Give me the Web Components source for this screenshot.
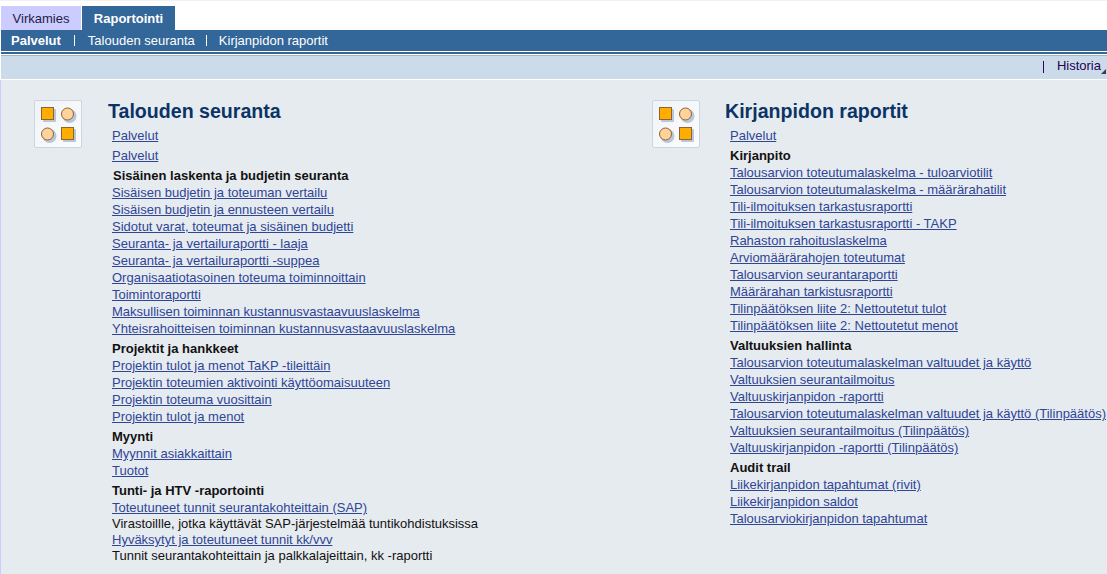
<!DOCTYPE html>
<html><head><meta charset="utf-8"><title>Raportointi</title>
<style>
html,body{margin:0;padding:0;height:574px;overflow:hidden;background:#fff;font:13px "Liberation Sans",Arial,sans-serif}
body{display:flex;flex-direction:column}
</style></head><body>
<app-tabs><app-tab>Virkamies</app-tab><app-tab active>Raportointi</app-tab></app-tabs>
<app-subnav><b>Palvelut</b><a>Talouden seuranta</a><a>Kirjanpidon raportit</a></app-subnav>
<app-toolbar>Historia</app-toolbar>
<app-content>
<report-panel heading="Talouden seuranta" style="--icon-left:33px;--text-left:107px;--pad:4px;width:617px">
<report-link first>Palvelut</report-link>
<report-link>Palvelut</report-link>
<report-head sub>Sisäinen laskenta ja budjetin seuranta</report-head>
<report-link>Sisäisen budjetin ja toteuman vertailu</report-link>
<report-link>Sisäisen budjetin ja ennusteen vertailu</report-link>
<report-link>Sidotut varat, toteumat ja sisäinen budjetti</report-link>
<report-link>Seuranta- ja vertailuraportti - laaja</report-link>
<report-link>Seuranta- ja vertailuraportti -suppea</report-link>
<report-link>Organisaatiotasoinen toteuma toiminnoittain</report-link>
<report-link>Toimintoraportti</report-link>
<report-link>Maksullisen toiminnan kustannusvastaavuuslaskelma</report-link>
<report-link>Yhteisrahoitteisen toiminnan kustannusvastaavuuslaskelma</report-link>
<report-head>Projektit ja hankkeet</report-head>
<report-link>Projektin tulot ja menot TaKP -tileittäin</report-link>
<report-link>Projektin toteumien aktivointi käyttöomaisuuteen</report-link>
<report-link>Projektin toteuma vuosittain</report-link>
<report-link>Projektin tulot ja menot</report-link>
<report-head>Myynti</report-head>
<report-link>Myynnit asiakkaittain</report-link>
<report-link>Tuotot</report-link>
<report-head>Tunti- ja HTV -raportointi</report-head>
<report-link tight>Toteutuneet tunnit seurantakohteittain (SAP)</report-link>
<report-link plain>Virastoillle, jotka käyttävät SAP-järjestelmää tuntikohdistuksissa</report-link>
<report-link tight>Hyväksytyt ja toteutuneet tunnit kk/vvv</report-link>
<report-link plain>Tunnit seurantakohteittain ja palkkalajeittain, kk -raportti</report-link>
</report-panel>
<report-panel heading="Kirjanpidon raportit" style="--icon-left:34px;--text-left:107px;--pad:5px;flex:1">
<report-link>Palvelut</report-link>
<report-head>Kirjanpito</report-head>
<report-link>Talousarvion toteutumalaskelma - tuloarviotilit</report-link>
<report-link>Talousarvion toteutumalaskelma - määrärahatilit</report-link>
<report-link>Tili-ilmoituksen tarkastusraportti</report-link>
<report-link>Tili-ilmoituksen tarkastusraportti - TAKP</report-link>
<report-link>Rahaston rahoituslaskelma</report-link>
<report-link>Arviomäärärahojen toteutumat</report-link>
<report-link>Talousarvion seurantaraportti</report-link>
<report-link>Määrärahan tarkistusraportti</report-link>
<report-link>Tilinpäätöksen liite 2: Nettoutetut tulot</report-link>
<report-link>Tilinpäätöksen liite 2: Nettoutetut menot</report-link>
<report-head>Valtuuksien hallinta</report-head>
<report-link>Talousarvion toteutumalaskelman valtuudet ja käyttö</report-link>
<report-link>Valtuuksien seurantailmoitus</report-link>
<report-link>Valtuuskirjanpidon -raportti</report-link>
<report-link>Talousarvion toteutumalaskelman valtuudet ja käyttö (Tilinpäätös)</report-link>
<report-link>Valtuuksien seurantailmoitus (Tilinpäätös)</report-link>
<report-link>Valtuuskirjanpidon -raportti (Tilinpäätös)</report-link>
<report-head>Audit trail</report-head>
<report-link>Liikekirjanpidon tapahtumat (rivit)</report-link>
<report-link>Liikekirjanpidon saldot</report-link>
<report-link>Talousarviokirjanpidon tapahtumat</report-link>
</report-panel>
</app-content>
<script>
function def(name, css, html){
  customElements.define(name, class extends HTMLElement{
    connectedCallback(){
      if(this.shadowRoot) return;
      const r=this.attachShadow({mode:'open'});
      r.innerHTML='<style>'+css+'</style>'+html;
    }
  });
}
def('app-tabs',':host{display:flex;height:24px;padding:5px 0 0 1px;gap:1px;background:#fff;border-top:1px solid #f2f2f2;flex:none}','<slot></slot>');
def('app-tab',`:host{display:flex;align-items:center;justify-content:center;height:24px;width:80px;background:#ccccff;color:#222244;font-size:13px}
:host([active]){width:93px;background:#336699;color:#fff;font-weight:bold}`,'<slot></slot>');
def('app-subnav',`:host{display:flex;align-items:center;height:21px;background:#336699;color:#fff;font-size:13px;margin-left:1px;flex:none;border-bottom:1px solid #fff;box-shadow:0 2px 0 #336699;margin-bottom:3px}
::slotted(b){padding-left:10px;padding-right:13px}
::slotted(a){border-left:1px solid #fff;line-height:11px;padding:0 11px 0 13px}
::slotted(a:last-child){padding-left:12px}`,'<slot></slot>');
def('app-toolbar',`:host{display:flex;align-items:center;justify-content:flex-end;height:23px;background:#ccdbe9;border-top:1px solid #a9b4c0;border-bottom:1px solid #fff;margin-left:1px;flex:none;color:#220055;font-size:13px;position:relative}
i{display:block;width:1px;height:12px;background:#330066;margin-right:13px;position:relative;top:-1px}
span{margin-right:6px;position:relative;top:-2px}
.c{position:absolute;right:1px;bottom:5px;width:0;height:0;border-left:5px solid transparent;border-bottom:5px solid #3a3a4a}`,'<i></i><span><slot></slot></span><div class="c"></div>');
def('app-content',`:host{display:flex;flex:1;background:#e6ebf0;border-left:1px solid #ccccff;min-height:0;overflow:hidden}`,'<slot></slot>');
def('report-panel',`:host{display:grid;grid-template-columns:var(--text-left) 1fr;grid-template-rows:auto 1fr;box-sizing:border-box;padding-top:20px;align-content:start}
.ic{grid-row:1/3;margin-left:var(--icon-left);width:48px;height:48px;box-sizing:border-box;border:1px solid #ccd6e0;border-radius:2px;background:linear-gradient(135deg,#f0f3f6,#fbfcfd)}
svg{display:block}
h2{margin:0;font:bold 19.6px/22px "Liberation Sans",Arial,sans-serif;color:#0b3366;height:27px}
.l{display:flex;flex-direction:column}`,
`<div class="ic"><svg width="46" height="46" viewBox="0 0 46 46">
<g fill="#b8c8dc"><rect x="8" y="8" width="13" height="13" rx="1"/><circle cx="34.5" cy="15" r="7"/><circle cx="14.5" cy="35" r="7"/><rect x="28" y="28" width="13" height="13" rx="1"/></g>
<rect x="6.5" y="6.5" width="12" height="12" fill="#ffad00" stroke="#8f6236"/>
<circle cx="32.5" cy="13" r="6" fill="#ffd39a" stroke="#8f6236"/>
<circle cx="12.5" cy="33" r="6" fill="#ffd39a" stroke="#8f6236"/>
<rect x="26.5" y="26.5" width="12" height="12" fill="#ffad00" stroke="#8f6236"/></svg></div>
<h2></h2><div class="l"><slot></slot></div>`);
def('report-link',`:host{display:block;height:17px;line-height:17px;padding-left:var(--pad);font-size:13px;color:#2f4596;white-space:nowrap;text-decoration:underline}
:host([first]){height:20px}
:host([plain]){color:#111;text-decoration:none;height:16px}
:host([tight]){height:16px}`,'<slot></slot>');
def('report-head',`:host{display:flex;align-items:flex-end;height:20px;line-height:17px;padding-left:var(--pad);font-size:13px;font-weight:bold;color:#111;white-space:nowrap}
:host([sub]){padding-left:5px}`,'<slot></slot>');
document.querySelectorAll('report-panel').forEach(p=>{p.shadowRoot.querySelector('h2').textContent=p.getAttribute('heading')});
</script>
</body></html>
